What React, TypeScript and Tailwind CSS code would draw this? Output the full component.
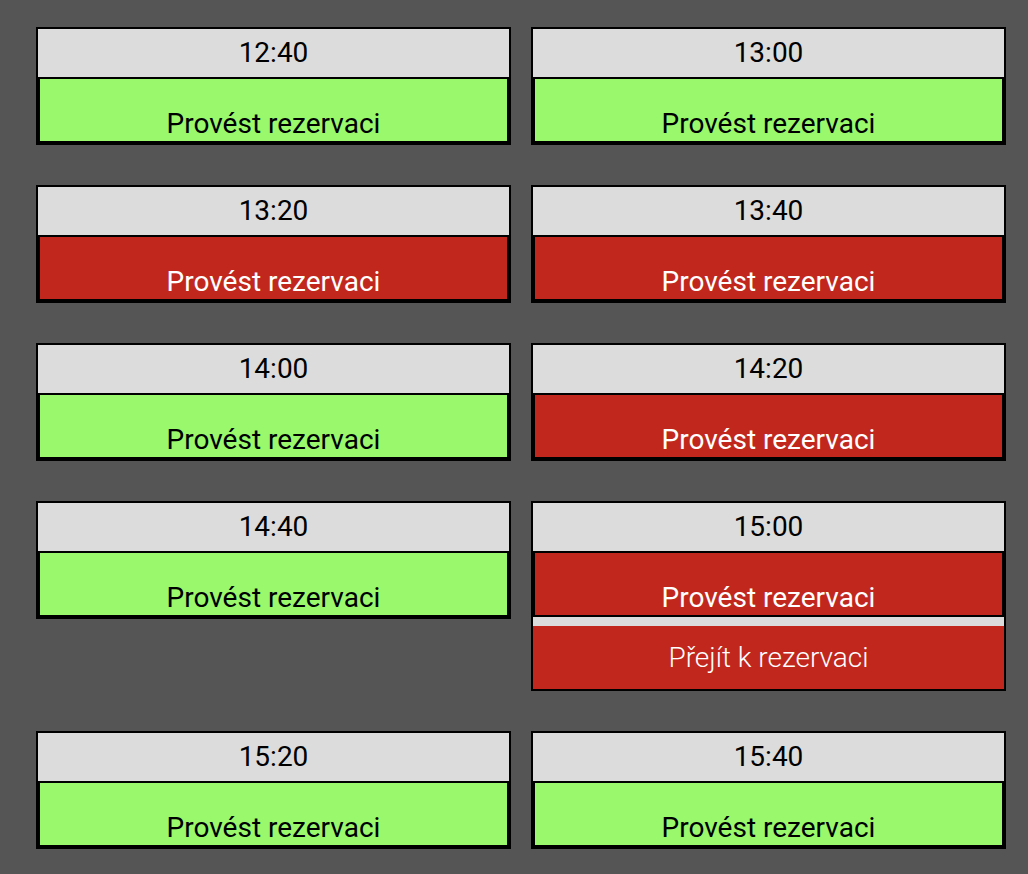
const slots: { time: string; free: boolean; link?: boolean }[] = [
  { time: "12:40", free: true },
  { time: "13:00", free: true },
  { time: "13:20", free: false },
  { time: "13:40", free: false },
  { time: "14:00", free: true },
  { time: "14:20", free: false },
  { time: "14:40", free: true },
  { time: "15:00", free: false, link: true },
  { time: "15:20", free: true },
  { time: "15:40", free: true },
];

function Slot({ time, free, link }: { time: string; free: boolean; link?: boolean }) {
  return (
    <div className="border-2 border-black bg-[#dcdcdc]">
      <div className="flex h-12 items-center justify-center text-[28px] text-black">{time}</div>
      <button
        className={
          free
            ? "flex h-[66px] w-full items-end justify-center border-2 border-black bg-[#99f86b] text-[28px] leading-[34px] text-black"
            : "flex h-[66px] w-full items-end justify-center border-2 border-black bg-[#c1271d] text-[28px] leading-[34px] text-white"
        }
      >
        Provést rezervaci
      </button>
      {link && (
        <div className="mt-[9px] flex h-[63px] items-center justify-center bg-[#c1271d] text-[28px] font-light text-white">
          Přejít k rezervaci
        </div>
      )}
    </div>
  );
}

export default function App() {
  return (
    <div className="min-h-[874px] bg-[#555555] pl-9 pt-[27px] font-['Roboto',sans-serif]">
      <div className="grid w-[970px] grid-cols-2 items-start gap-x-5 gap-y-10">
        {slots.map((s) => (
          <Slot key={s.time} {...s} />
        ))}
      </div>
    </div>
  );
}
